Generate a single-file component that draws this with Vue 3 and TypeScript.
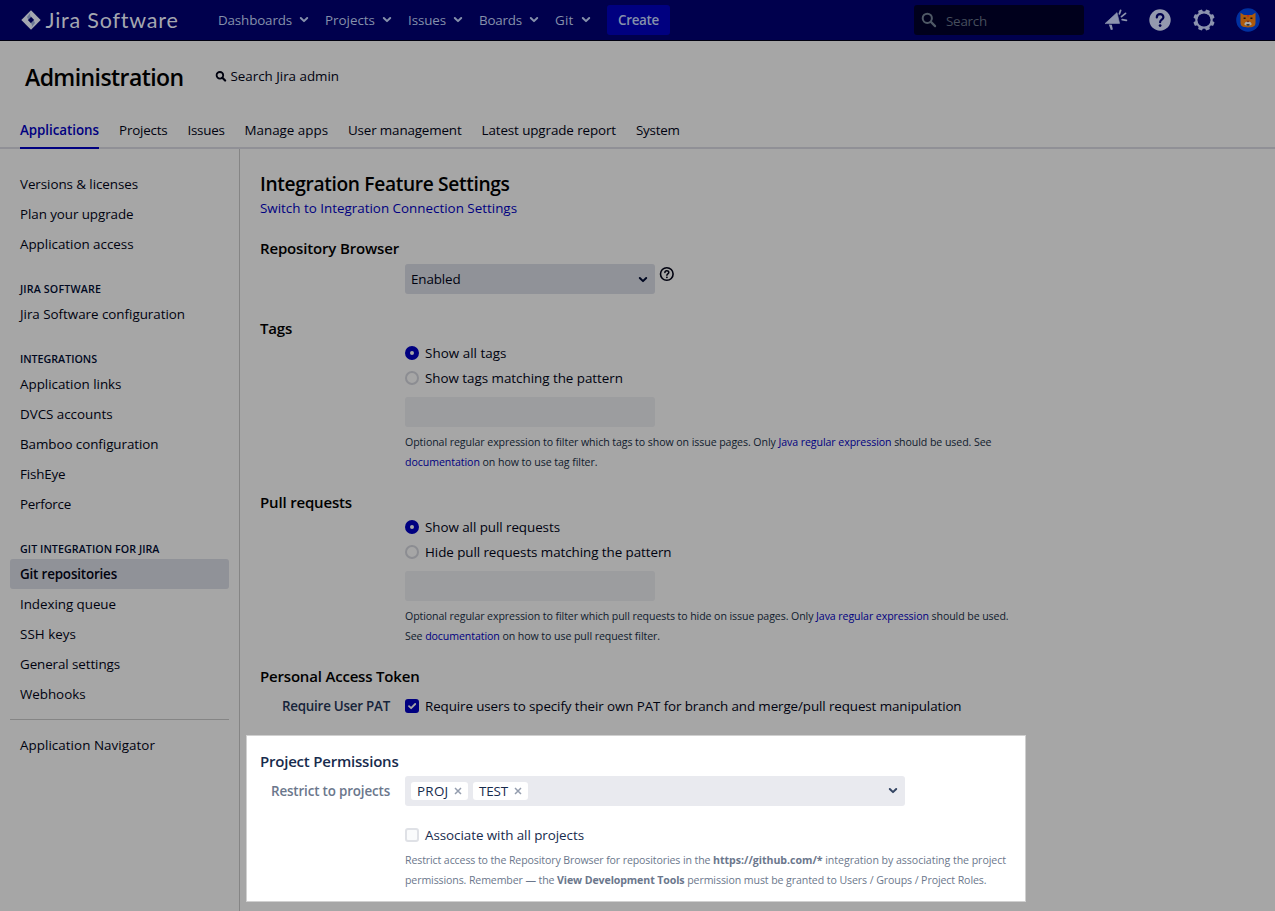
<script setup lang="ts">
import type { Directive } from 'vue'

interface Label {
  text: string
  width: number
}

interface NavGroup {
  heading?: Label
  items: Label[]
}

/** Tracks a one-line label so that it fills the given width in pixels. */
const vFit: Directive<HTMLElement, number> = {
  mounted(el, { value }) {
    const natural = el.getBoundingClientRect().width
    const count = (el.textContent ?? '').length
    if (!value || !count) return
    const spacing = (value - natural) / count
    el.style.letterSpacing = `${spacing.toFixed(3)}px`
  },
}

const menus: Label[] = [
  { text: 'Dashboards', width: 74 },
  { text: 'Projects', width: 50 },
  { text: 'Issues', width: 38 },
  { text: 'Boards', width: 43 },
  { text: 'Git', width: 18.5 },
]

const tabs: Label[] = [
  { text: 'Applications', width: 79 },
  { text: 'Projects', width: 48.5 },
  { text: 'Issues', width: 37 },
  { text: 'Manage apps', width: 83.5 },
  { text: 'User management', width: 113.5 },
  { text: 'Latest upgrade report', width: 134.5 },
  { text: 'System', width: 43.5 },
]

const groups: NavGroup[] = [
  {
    items: [
      { text: 'Versions & licenses', width: 118 },
      { text: 'Plan your upgrade', width: 113.5 },
      { text: 'Application access', width: 113.5 },
    ],
  },
  {
    heading: { text: 'JIRA SOFTWARE', width: 81 },
    items: [{ text: 'Jira Software configuration', width: 165 }],
  },
  {
    heading: { text: 'INTEGRATIONS', width: 77 },
    items: [
      { text: 'Application links', width: 101.5 },
      { text: 'DVCS accounts', width: 92.5 },
      { text: 'Bamboo configuration', width: 138.5 },
      { text: 'FishEye', width: 45.5 },
      { text: 'Perforce', width: 51 },
    ],
  },
  {
    heading: { text: 'GIT INTEGRATION FOR JIRA', width: 139.5 },
    items: [
      { text: 'Git repositories', width: 97 },
      { text: 'Indexing queue', width: 96 },
      { text: 'SSH keys', width: 56 },
      { text: 'General settings', width: 100 },
      { text: 'Webhooks', width: 65.5 },
    ],
  },
]

const activeItem = 'Git repositories'
const projects: Label[] = [
  { text: 'PROJ', width: 31.5 },
  { text: 'TEST', width: 29 },
]
const rays = [0, 45, 90, 135, 180, 225, 270, 315]
</script>

<template>
  <div class="page">
    <header class="topbar">
      <div class="brand">
        <svg class="brand-mark" width="20" height="20" viewBox="0 0 20 20">
          <path d="M10 .3 19.7 10 10 19.7.3 10Z" fill="#a4a7b0" />
          <path d="M10 6.8 13.2 10 10 13.2 6.8 10Z" fill="#00004d" />
          <path d="M10 2Q8 4.5 10 6.8L7.2 9.5 6 7Z" fill="#6b7896" />
          <path d="M10 18Q12 15.5 10 13.2l2.8-2.7 1.2 2.5Z" fill="#6b7896" />
        </svg>
        <span v-fit="132.5" class="brand-name">Jira Software</span>
      </div>
      <nav class="menus">
        <a v-for="m in menus" :key="m.text" class="menu">
          <span v-fit="m.width">{{ m.text }}</span>
          <svg width="10" height="8" viewBox="0 0 10 8"><path d="M1.8 2 5 5.1 8.2 2" fill="none" stroke="#8590ab" stroke-width="2" stroke-linecap="round" stroke-linejoin="round" /></svg>
        </a>
      </nav>
      <button class="create"><span v-fit="41">Create</span></button>
      <div class="search">
        <svg width="16" height="16" viewBox="0 0 16 16"><circle cx="6.3" cy="6.3" r="4.6" fill="none" stroke="#4f5966" stroke-width="2" /><path d="m9.9 9.9 4.2 4.2" stroke="#4f5966" stroke-width="2.2" stroke-linecap="round" /></svg>
        <span v-fit="41">Search</span>
      </div>
      <div class="tools">
        <svg width="24" height="24" viewBox="0 0 24 24" fill="#8c93ae">
          <path d="M1 15.6 13 4.6 15.6 15.4Z" stroke="#8c93ae" stroke-width=".6" stroke-linejoin="round" />
          <path d="m4.8 16.4 3 .3 1.1 4.8-2 .4Z" />
          <path d="m15.4 5.8 1.2-3.4M17.5 8.6l4-3.2M18.2 11.6l4.2.7" stroke="#8c93ae" stroke-width="1.8" stroke-linecap="round" />
        </svg>
        <svg width="24" height="24" viewBox="0 0 24 24">
          <circle cx="12" cy="12" r="10.7" fill="#9499ae" />
          <path d="M8.8 9.4C8.8 5 15.4 5 15.4 9.2c0 2.5-3.3 2.5-3.3 5" fill="none" stroke="#00004d" stroke-width="2.2" stroke-linecap="round" />
          <circle cx="12.1" cy="17.6" r="1.4" fill="#00004d" />
        </svg>
        <svg width="24" height="24" viewBox="0 0 24 24">
          <rect v-for="r in rays" :key="r" x="9.8" y="1.3" width="4.4" height="4" rx="1" :transform="`rotate(${r + 22.5} 12 12)`" fill="#8c93ae" />
          <circle cx="12" cy="12" r="7.7" fill="none" stroke="#8c93ae" stroke-width="2.2" />
        </svg>
        <svg width="24" height="24" viewBox="0 0 24 24">
          <circle cx="12" cy="12" r="11.8" fill="#0030a0" />
          <path d="M4.5 4.7 8 7h8l3.5-2.3v10.1c0 4-3.3 4.6-7.5 4.6s-7.5-.6-7.5-4.6Z" fill="#ad5b0c" />
          <path d="m10.5 7 1.5 2.5L13.5 7Z" fill="#c02c18" />
          <path d="M7.6 10.3h2M14.4 10.3h2" stroke="#20110d" stroke-width="1.5" />
          <path d="M8.3 16.5c0-1.9 1.7-3 3.7-3s3.7 1.1 3.7 3l-2 1.3h-3.4Z" fill="#aaa" />
          <path d="M10.4 12.7h3.2L12 14.6Z" fill="#6b1c14" />
          <path d="M10.5 16.2h3v1.4h-3Z" fill="#191919" />
        </svg>
      </div>
    </header>

    <section class="admin-head">
      <div class="admin-title">
        <h1><span v-fit="158.5">Administration</span></h1>
        <a class="admin-search">
          <svg width="12" height="12" viewBox="0 0 12 12"><circle cx="4.9" cy="5.3" r="3.3" fill="none" stroke="#00020f" stroke-width="1.8" /><path d="m7.4 7.8 2.7 2.7" stroke="#00020f" stroke-width="2.2" stroke-linecap="round" /></svg>
          <span v-fit="108.5">Search Jira admin</span>
        </a>
      </div>
      <nav class="tabs">
        <a v-for="(t, i) in tabs" :key="t.text" class="tab" :class="{ active: i === 0 }"><span v-fit="t.width">{{ t.text }}</span></a>
      </nav>
    </section>

    <div class="columns">
      <aside class="sidebar">
        <div v-for="(g, gi) in groups" :key="gi" class="group">
          <h2 v-if="g.heading" class="group-heading"><span v-fit="g.heading.width">{{ g.heading.text }}</span></h2>
          <a v-for="n in g.items" :key="n.text" class="nav-item" :class="{ active: n.text === activeItem }"><span v-fit="n.width">{{ n.text }}</span></a>
        </div>
        <div class="separator"></div>
        <a class="nav-item"><span v-fit="135">Application Navigator</span></a>
      </aside>

      <main class="content">
        <h2 class="title"><span v-fit="249.5">Integration Feature Settings</span></h2>
        <a class="switch"><span v-fit="257">Switch to Integration Connection Settings</span></a>

        <h3 class="section"><span v-fit="139">Repository Browser</span></h3>
        <div class="field select-row">
          <div class="select">
            <span v-fit="49.5">Enabled</span>
            <svg class="select-arrow" width="10" height="8" viewBox="0 0 10 8"><path d="M1.8 2 5 5.1 8.2 2" fill="none" stroke="#000822" stroke-width="2" stroke-linecap="round" stroke-linejoin="round" /></svg>
          </div>
          <svg class="help-icon" width="16" height="16" viewBox="0 0 16 16"><circle cx="7.8" cy="8" r="6.3" fill="none" stroke="#00020f" stroke-width="1.6" /><path d="M5.9 6.6c0-2.5 3.9-2.5 3.9-.1C9.8 7.9 7.9 7.9 7.9 9.2" fill="none" stroke="#00020f" stroke-width="1.5" stroke-linecap="round" /><circle cx="7.9" cy="11.3" r=".9" fill="#00020f" /></svg>
        </div>

        <h3 class="section tags"><span v-fit="32">Tags</span></h3>
        <div class="field">
          <label class="option"><i class="radio on"></i><span v-fit="81.5">Show all tags</span></label>
          <label class="option"><i class="radio"></i><span v-fit="198">Show tags matching the pattern</span></label>
          <div class="input"></div>
          <p class="hint"><span v-fit="586.5">Optional regular expression to filter which tags to show on issue pages. Only <a>Java regular expression</a> should be used. See</span></p>
          <p class="hint"><span v-fit="192.5"><a>documentation</a> on how to use tag filter.</span></p>
        </div>

        <h3 class="section"><span v-fit="92">Pull requests</span></h3>
        <div class="field">
          <label class="option"><i class="radio on"></i><span v-fit="135">Show all pull requests</span></label>
          <label class="option"><i class="radio"></i><span v-fit="246.5">Hide pull requests matching the pattern</span></label>
          <div class="input"></div>
          <p class="hint"><span v-fit="603.5">Optional regular expression to filter which pull requests to hide on issue pages. Only <a>Java regular expression</a> should be used.</span></p>
          <p class="hint"><span v-fit="255">See <a>documentation</a> on how to use pull request filter.</span></p>
        </div>

        <h3 class="section"><span v-fit="159.5">Personal Access Token</span></h3>
        <div class="labelled pat">
          <div class="label"><span v-fit="108">Require User PAT</span></div>
          <label class="option"><svg class="check" width="14" height="14" viewBox="0 0 14 14"><rect width="14" height="14" rx="3" fill="#000080" /><path d="m4 7.2 2.1 2L10.2 5" fill="none" stroke="#a6a6a6" stroke-width="1.8" stroke-linecap="round" stroke-linejoin="round" /></svg><span v-fit="536.5">Require users to specify their own PAT for branch and merge/pull request manipulation</span></label>
        </div>

        <section class="spotlight">
          <h3 class="section"><span v-fit="138.5">Project Permissions</span></h3>
          <div class="labelled">
            <div class="label"><span v-fit="119">Restrict to projects</span></div>
            <div class="multi">
              <span v-for="p in projects" :key="p.text" class="chip">
                <span v-fit="p.width">{{ p.text }}</span>
                <svg width="8" height="8" viewBox="0 0 8 8"><path d="m1 1 6 6M7 1 1 7" stroke="#949dae" stroke-width="1.5" /></svg>
              </span>
              <svg class="multi-arrow" width="10" height="8" viewBox="0 0 10 8"><path d="M1.8 2 5 5.1 8.2 2" fill="none" stroke="#344563" stroke-width="2" stroke-linecap="round" stroke-linejoin="round" /></svg>
            </div>
          </div>
          <div class="spot-field">
            <label class="option"><i class="box"></i><span v-fit="159">Associate with all projects</span></label>
            <p class="hint">
              <span v-fit="308">Restrict access to the Repository Browser for repositories in the&nbsp;</span><b><span v-fit="109.5">https://github.com/*</span></b><span v-fit="183.5">&nbsp;integration by associating the project</span>
            </p>
            <p class="hint">
              <span v-fit="152">permissions. Remember — the&nbsp;</span><b><span v-fit="127.5">View Development Tools</span></b><span v-fit="302">&nbsp;permission must be granted to Users / Groups / Project Roles.</span>
            </p>
          </div>
        </section>
      </main>
    </div>
  </div>
</template>

<style>
body {
  margin: 0;
  background: #a6a6a6;
  overflow: hidden;
}
</style>

<style scoped>
.page {
  box-sizing: border-box;
  width: 1275px;
  height: 911px;
  display: flex;
  flex-direction: column;
  overflow: hidden;
  background: #a6a6a6;
  color: #00020f;
  font: 13.4px/20px "Open Sans", "Noto Sans", sans-serif;
}
.page *,
.page *::before {
  box-sizing: border-box;
}
h1, h2, h3, p {
  margin: 0;
}
svg {
  display: block;
  flex: none;
}
span {
  white-space: nowrap;
}

.topbar {
  flex: none;
  display: flex;
  align-items: center;
  height: 41px;
  padding: 0 15px 0 20.5px;
  background: #00004d;
  border-bottom: 1px solid #000010;
}
.brand {
  display: flex;
  align-items: center;
  width: 197.5px;
  gap: 5px;
}
.brand-name {
  color: #a4a7b0;
  font: 21.5px/24px Lato, "Open Sans", sans-serif;
}
.menus {
  display: flex;
  gap: 16px;
  color: #8590ab;
}
.menu {
  display: flex;
  align-items: center;
  gap: 7px;
}
.create {
  width: 63px;
  height: 30px;
  margin-left: 16.5px;
  padding: 0;
  border: 0;
  border-radius: 3px;
  background: #000080;
  color: #8590ab;
  font: 600 13.4px/20px "Open Sans", sans-serif;
}
.search {
  display: flex;
  align-items: center;
  gap: 9px;
  width: 170px;
  height: 30px;
  margin-left: auto;
  padding-left: 7px;
  border-radius: 3px;
  background: #00001c;
  color: #464e5c;
}
.search span {
  padding-top: 2px;
}
.tools {
  display: flex;
  gap: 20px;
  margin-left: 20px;
}

.admin-head {
  flex: none;
  height: 108px;
  display: flex;
  flex-direction: column;
  justify-content: space-between;
  border-bottom: 2px solid #909096;
}
.admin-title {
  display: flex;
  align-items: center;
  gap: 31px;
  padding: 20px 0 0 25px;
}
.admin-title h1 {
  font-size: 23px;
  line-height: 32px;
  font-weight: 600;
  color: #000;
}
.admin-search {
  display: flex;
  align-items: center;
  gap: 4px;
  padding-bottom: 2px;
}
.tabs {
  display: flex;
  gap: 20px;
  padding-left: 20px;
  margin-bottom: -2px;
}
.tab {
  height: 29px;
}
.tab.active {
  color: #000080;
  font-weight: 600;
  border-bottom: 2px solid #000080;
}

.columns {
  flex: 1;
  display: flex;
}
.sidebar {
  width: 240px;
  padding: 20px 10px;
  border-right: 1px solid #858585;
}
.group + .group {
  margin-top: 20px;
}
.group-heading {
  height: 20px;
  padding-left: 10px;
  font-size: 10.7px;
  font-weight: 600;
  color: #00081f;
}
.nav-item {
  display: flex;
  align-items: center;
  height: 30px;
  padding-left: 10px;
  border-radius: 3px;
}
.nav-item.active {
  background: #909298;
  font-weight: 600;
}
.separator {
  height: 1px;
  margin: 10px 0;
  background: #858585;
}

.content {
  flex: 1;
  padding: 23px 0 0 20px;
}
.title {
  height: 26px;
  line-height: 24px;
  font-size: 19.2px;
  font-weight: 600;
  color: #000;
}
.switch {
  display: block;
  height: 20px;
  color: #000080;
}
.section {
  height: 20px;
  margin-top: 20px;
  font-size: 15px;
  font-weight: 600;
  color: #000;
}
.field {
  padding: 3px 0 0 145px;
}
.select-row {
  display: flex;
  gap: 4px;
  padding-top: 6px;
}
.tags {
  margin-top: 24px;
}
.select {
  display: flex;
  align-items: center;
  justify-content: space-between;
  width: 250px;
  height: 30px;
  padding: 0 7.5px 0 6px;
  border-radius: 3px;
  background: #909298;
}
.select-arrow {
  margin-top: 2px;
}
.help-icon {
  margin-top: 2px;
}
.option {
  display: flex;
  align-items: center;
  gap: 6px;
  height: 24px;
}
.option + .option {
  margin-top: 1px;
}
.radio {
  flex: none;
  width: 14px;
  height: 14px;
  border: 2px solid #8c8d92;
  border-radius: 50%;
}
.radio.on {
  border: 5px solid #000080;
}
.input {
  width: 250px;
  height: 30px;
  margin: 7px 0 5px;
  border-radius: 3px;
  background: #9c9d9f;
}
.hint {
  height: 20px;
  font-size: 10.6px;
  color: #101b2d;
  white-space: nowrap;
}
.hint a {
  color: #000080;
}
.labelled {
  display: flex;
  align-items: center;
}
.label {
  width: 130px;
  margin-right: 15px;
  text-align: right;
  font-weight: 600;
  color: #17243a;
}
.pat {
  margin-top: 8px;
}

.spotlight {
  width: 780px;
  height: 167px;
  margin: 17px 0 0 -14px;
  padding: 15px 0 0 13px;
  border: 1px solid #d0d0d0;
  background: #fff;
  color: #172b4d;
}
.spotlight .section {
  margin: 0 0 5px;
  color: #172b4d;
}
.spotlight .label {
  color: #6b778c;
}
.multi {
  display: flex;
  align-items: center;
  gap: 5px;
  width: 500px;
  height: 30px;
  padding: 0 7.5px 0 6px;
  border-radius: 3px;
  background: #e9eaef;
}
.chip {
  display: flex;
  align-items: center;
  gap: 5.5px;
  height: 18px;
  padding: 0 6px;
  border-radius: 3px;
  background: #fff;
}
.multi-arrow {
  margin-left: auto;
}
.spot-field {
  padding: 17px 0 0 145px;
}
.box {
  flex: none;
  width: 14px;
  height: 14px;
  border: 2px solid #dfe1e6;
  border-radius: 3px;
  background: #fafbfc;
}
.spotlight .option {
  margin-bottom: 3px;
}
.spotlight .hint {
  color: #6b778c;
}
.hint b {
  font-weight: 700;
}
</style>
